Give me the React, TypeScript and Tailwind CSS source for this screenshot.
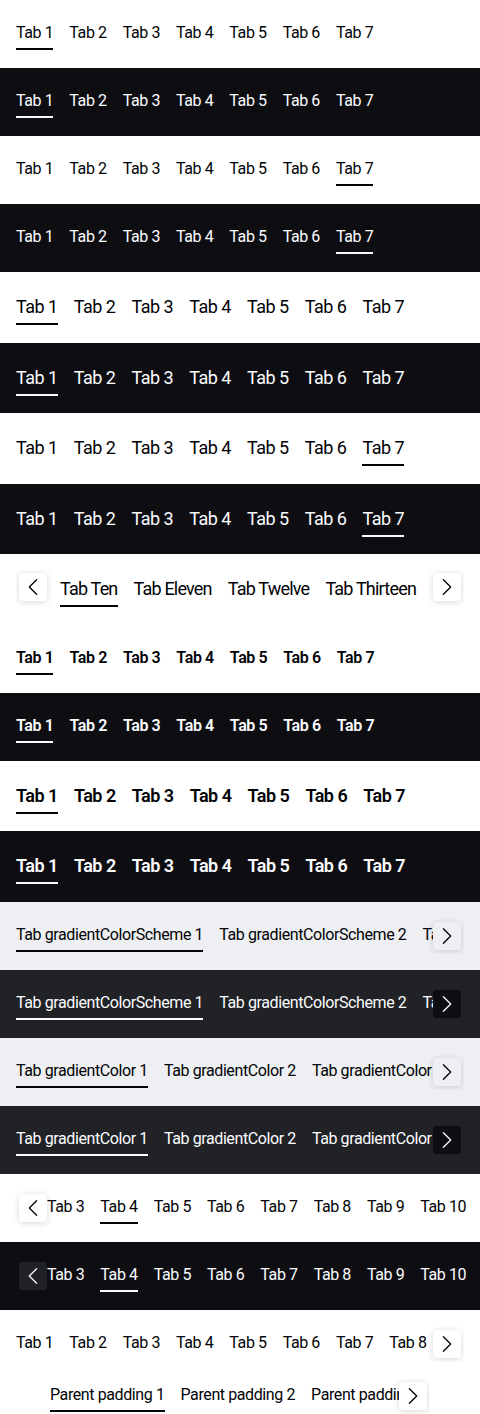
import clsx from "clsx"

type Scheme = "light" | "dark" | "lightGrad" | "darkGrad"
type Size = "small" | "medium"

const sectionBg: Record<Scheme, string> = {
  light: "bg-white",
  dark: "bg-[#0e0e12]",
  lightGrad: "bg-[#eeeff2]",
  darkGrad: "bg-[#212225]",
}

const buttonBg: Record<Scheme, string> = {
  light: "bg-white shadow-[0_1px_6px_rgba(0,0,0,0.16)]",
  dark: "bg-[#212225]",
  lightGrad: "bg-[#eeeff2] shadow-[0_1px_6px_rgba(0,0,0,0.16)]",
  darkGrad: "bg-[#0e0e12]",
}

const isDark = (s: Scheme) => s === "dark" || s === "darkGrad"

function Chevron({ dir }: { dir: "left" | "right" }) {
  return (
    <svg viewBox="0 0 24 24" className="h-6 w-6" fill="none" stroke="currentColor" strokeWidth={1.3} strokeLinecap="round" strokeLinejoin="round">
      <path d={dir === "left" ? "M15.6 4.7 8.3 12l7.3 7.3" : "M8.4 4.7 15.7 12l-7.3 7.3"} />
    </svg>
  )
}

function ScrollButton({ dir, scheme, size }: { dir: "left" | "right"; scheme: Scheme; size: Size }) {
  return (
    <div
      className={clsx(
        "absolute inset-y-0 flex w-[31px]",
        dir === "left" ? "left-0 pl-[3px]" : "right-0 justify-start",
        size === "small" ? "items-center" : "items-start pt-[3px]",
        sectionBg[scheme]
      )}
    >
      <button className={clsx("flex h-7 w-7 items-center justify-center rounded", buttonBg[scheme])}>
        <Chevron dir={dir} />
      </button>
    </div>
  )
}

function Tab({
  label,
  active,
  size,
  bold,
  tight,
  dark,
}: {
  label: string
  active: boolean
  size: Size
  bold?: boolean
  tight?: boolean
  dark: boolean
}) {
  return (
    <div className="flex shrink-0 flex-col pt-[5px]">
      <span
        className={clsx(
          "whitespace-nowrap",
          size === "small" ? "text-[16px] leading-6 tracking-[-0.4px]" : "text-[18px] leading-[27px]",
          size === "medium" && (tight ? "tracking-[-0.8px]" : "tracking-[-0.5px]"),
          bold && "font-semibold"
        )}
      >
        {label}
      </span>
      <span className={clsx("mt-[3px] h-[2px] w-full", active ? (dark ? "bg-[#fbfcff]" : "bg-[#010205]") : "bg-transparent")} />
    </div>
  )
}

type Row = {
  scheme: Scheme
  size: Size
  labels: string[]
  active?: number
  bold?: boolean
  tight?: boolean
  prev?: boolean
  next?: boolean
  h: string
  offset?: string
  pad?: string
}

const nums = (from: number, to: number) => Array.from({ length: to - from + 1 }, (_, i) => `Tab ${from + i}`)
const seven = nums(1, 7)

const rows: Row[] = [
  { scheme: "light", size: "small", labels: seven, active: 0, h: "h-[68px]" },
  { scheme: "dark", size: "small", labels: seven, active: 0, h: "h-[68px]" },
  { scheme: "light", size: "small", labels: seven, active: 6, h: "h-[68px]" },
  { scheme: "dark", size: "small", labels: seven, active: 6, h: "h-[68px]" },
  { scheme: "light", size: "medium", labels: seven, active: 0, h: "h-[71px]" },
  { scheme: "dark", size: "medium", labels: seven, active: 0, h: "h-[70px]" },
  { scheme: "light", size: "medium", labels: seven, active: 6, h: "h-[71px]" },
  { scheme: "dark", size: "medium", labels: seven, active: 6, h: "h-[70px]" },
  {
    scheme: "light",
    size: "medium",
    labels: ["Tab Ten", "Tab Eleven", "Tab Twelve", "Tab Thirteen"],
    active: 0,
    tight: true,
    prev: true,
    next: true,
    offset: "pl-[44px]",
    h: "h-[71px]",
  },
  { scheme: "light", size: "small", labels: seven, active: 0, bold: true, h: "h-[68px]" },
  { scheme: "dark", size: "small", labels: seven, active: 0, bold: true, h: "h-[68px]" },
  { scheme: "light", size: "medium", labels: seven, active: 0, bold: true, h: "h-[70px]" },
  { scheme: "dark", size: "medium", labels: seven, active: 0, bold: true, h: "h-[71px]" },
  {
    scheme: "lightGrad",
    size: "small",
    labels: ["Tab gradientColorScheme 1", "Tab gradientColorScheme 2", "Tab gradientColorScheme 3"],
    active: 0,
    next: true,
    h: "h-[68px]",
  },
  {
    scheme: "darkGrad",
    size: "small",
    labels: ["Tab gradientColorScheme 1", "Tab gradientColorScheme 2", "Tab gradientColorScheme 3"],
    active: 0,
    next: true,
    h: "h-[68px]",
  },
  {
    scheme: "lightGrad",
    size: "small",
    labels: ["Tab gradientColor 1", "Tab gradientColor 2", "Tab gradientColor 3"],
    active: 0,
    next: true,
    h: "h-[68px]",
  },
  {
    scheme: "darkGrad",
    size: "small",
    labels: ["Tab gradientColor 1", "Tab gradientColor 2", "Tab gradientColor 3"],
    active: 0,
    next: true,
    h: "h-[68px]",
  },
  { scheme: "light", size: "small", labels: nums(3, 10), active: 1, prev: true, offset: "pl-[31px]", h: "h-[68px]" },
  { scheme: "dark", size: "small", labels: nums(3, 10), active: 1, prev: true, offset: "pl-[31px]", h: "h-[68px]" },
  { scheme: "light", size: "small", labels: nums(1, 8), next: true, h: "h-[68px]" },
  {
    scheme: "light",
    size: "small",
    labels: ["Parent padding 1", "Parent padding 2", "Parent padding 3"],
    active: 0,
    next: true,
    pad: "px-[50px] pt-0",
    h: "h-[36px]",
  },
]

function TabsBar({ row }: { row: Row }) {
  const dark = isDark(row.scheme)
  return (
    // only clip where the next-button hides the rest of the row
    <div className={clsx("relative", row.next && "overflow-hidden", row.size === "small" ? "h-9" : "h-[39px]")}>
      <div className={clsx("flex gap-4", row.offset)}>
        {row.labels.map((label, i) => (
          <Tab
            key={label}
            label={label}
            active={row.active === i}
            size={row.size}
            bold={row.bold}
            tight={row.tight}
            dark={dark}
          />
        ))}
      </div>
      {row.prev && <ScrollButton dir="left" scheme={row.scheme} size={row.size} />}
      {row.next && <ScrollButton dir="right" scheme={row.scheme} size={row.size} />}
    </div>
  )
}

export default function App() {
  return (
    <div className="w-[480px] overflow-hidden font-['Roboto',sans-serif]">
      {rows.map((row, i) => (
        <section
          key={i}
          className={clsx(
            row.h,
            row.pad ?? "px-4 pt-4",
            sectionBg[row.scheme],
            isDark(row.scheme) ? "text-[#fbfcff]" : "text-[#010205]"
          )}
        >
          <TabsBar row={row} />
        </section>
      ))}
    </div>
  )
}
